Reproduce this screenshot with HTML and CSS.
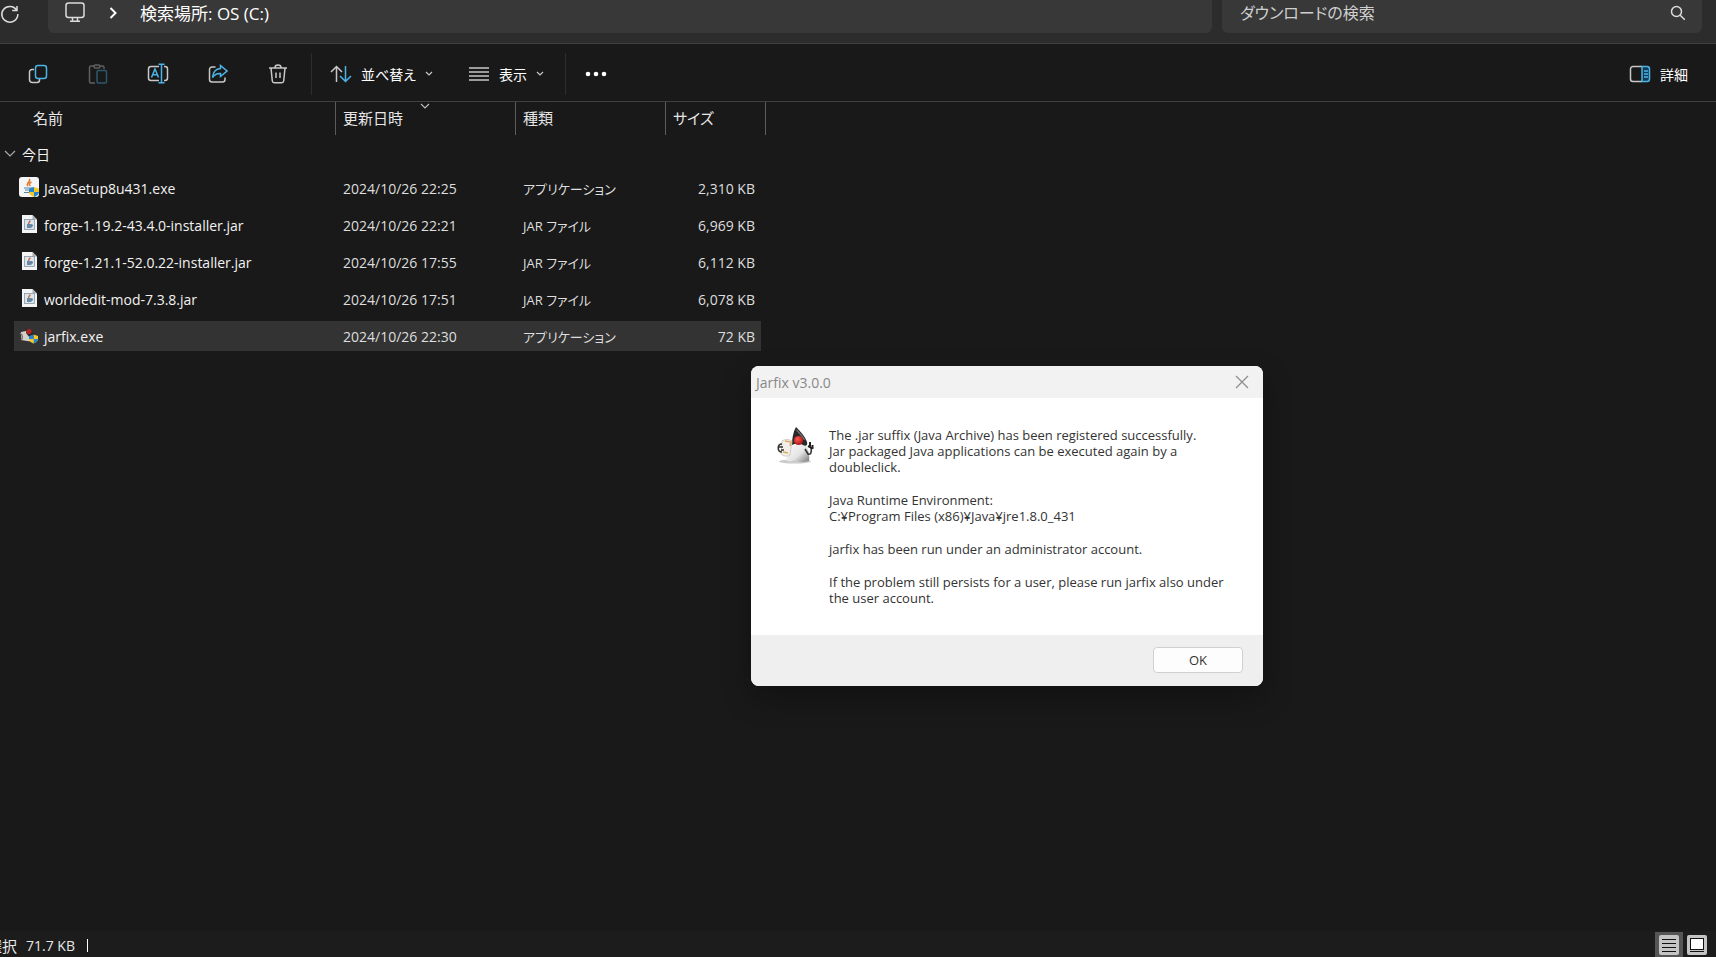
FILE: index.html
```html
<!DOCTYPE html>
<html lang="ja">
<head>
    <meta charset="UTF-8">
    <meta name="viewport" content="width=device-width, initial-scale=1.0">
    <title>ダウンロード</title>
    <link rel="stylesheet" href="styles.css">
</head>
<body>
    <div class="explorer">
        <header class="navbar">
            <button class="refresh" aria-label="最新の情報に更新">
                <svg width="20" height="20" viewBox="0 0 20 20"><path d="M16.6 6.2A8 7.8 0 1 0 17.8 10M17 2v4.6h-4.8"/></svg>
            </button>
            <nav class="address">
                <svg class="monitor" width="22" height="22" viewBox="0 0 22 22"><rect x="2" y="1" width="18" height="14.5" rx="2.5"/><path d="M8.5 16v3M13.500 16v3M6 19.300h10"/></svg>
                <svg class="crumb-arrow" width="8" height="12" viewBox="0 0 8 12"><path d="M1.500 1l5 5-5 5"/></svg>
                <a href="#">検索場所: OS (C:)</a>
            </nav>
            <form class="search">
                <input type="text" placeholder="ダウンロードの検索" aria-label="ダウンロードの検索">
                <svg width="16" height="16" viewBox="0 0 16 16"><circle cx="6.500" cy="6.500" r="5"/><path d="M10.200 10.200l4.600 4.600"/></svg>
            </form>
        </header>

        <div class="toolbar">
            <button class="tool" aria-label="コピー">
                <svg width="20" height="20" viewBox="0 0 20 20"><path class="gray" d="M6 5.500H4A2.500 2.500 0 0 0 1.500 8v7.500A3 3 0 0 0 4.500 18.500H9a2.500 2.500 0 0 0 2.500-2.500v-1"/><rect class="blue" x="7.500" y="1.500" width="11" height="13" rx="2.500"/></svg>
            </button>
            <button class="tool" aria-label="貼り付け" disabled>
                <svg width="20" height="20" viewBox="0 0 20 20"><path class="gray" d="M7 19H3a1.500 1.500 0 0 1-1.500-1.500v-14A1.500 1.500 0 0 1 3 2h3M12 2h2.500A1.500 1.500 0 0 1 16 3.500V5"/><rect class="gray" x="6" y="1" width="6" height="3" rx="1.500"/><rect class="blue" x="9" y="6.500" width="9.500" height="12.500" rx="1.500"/></svg>
            </button>
            <button class="tool" aria-label="名前の変更">
                <svg width="22" height="22" viewBox="0 0 22 22"><path class="gray" d="M12 3.500H4A2.500 2.500 0 0 0 1.500 6v9A2.500 2.500 0 0 0 4 17.500h8M17 3.500h1A2.500 2.500 0 0 1 20.500 6v9a2.500 2.500 0 0 1-2.500 2.500h-1"/><path class="blue" d="M4.500 14.500l3.500-8.500 3.500 8.500M5.800 11.800h4.600M14.500 1.500v18M11.500 1.200h6M11.500 19.800h6"/></svg>
            </button>
            <button class="tool" aria-label="共有">
                <svg width="20" height="20" viewBox="0 0 20 20"><path class="gray" d="M7.500 3H4A2.500 2.500 0 0 0 1.500 5.500v10A2.500 2.500 0 0 0 4 18h10.500a2.500 2.500 0 0 0 2.500-2.500v-2"/><path class="blue" d="M12.500 1.500l6.500 5.500-6.500 5.500V9.500C8.500 9.300 6.500 10.500 4.500 13.500 5 8.500 7.500 5 12.500 4.600z"/></svg>
            </button>
            <button class="tool" aria-label="削除">
                <svg width="20" height="20" viewBox="0 0 20 20"><path class="gray" d="M1 4h18M7 3.500a3 2.500 0 0 1 6 0M3 4l1.300 13a2 2 0 0 0 2 1.800h7.400a2 2 0 0 0 2-1.800L17 4M8 8.500v5.500M12 8.500v5.500"/></svg>
            </button>
            <div class="divider"></div>
            <button class="menu">
                <svg width="22" height="20" viewBox="0 0 22 20"><path class="gray" d="M6.500 18V2.500M1 8l5.500-5.500L12 8"/><path class="blue" d="M15.500 2v15.500M10 12l5.500 5.500L21 12"/></svg>
                <span>並べ替え</span>
                <svg class="caret" width="8" height="6" viewBox="0 0 8 6"><path d="M1 1l3 3 3-3"/></svg>
            </button>
            <button class="menu">
                <svg width="22" height="20" viewBox="0 0 22 20"><path class="gray" d="M1 4h20M1 8h20M1 12h20M1 16h20"/></svg>
                <span>表示</span>
                <svg class="caret" width="8" height="6" viewBox="0 0 8 6"><path d="M1 1l3 3 3-3"/></svg>
            </button>
            <div class="divider"></div>
            <button class="tool more" aria-label="もっと見る">
                <svg width="22" height="6" viewBox="0 0 22 6"><circle cx="3" cy="3" r="2.300"/><circle cx="11" cy="3" r="2.300"/><circle cx="19" cy="3" r="2.300"/></svg>
            </button>
            <button class="menu details">
                <svg width="22" height="18" viewBox="0 0 22 18"><path class="gray" d="M13 1.500H4A2.500 2.500 0 0 0 1.500 4v10A2.500 2.500 0 0 0 4 16.500h9"/><path class="blue fill" d="M13 1.500h5A2.500 2.500 0 0 1 20.500 4v10a2.500 2.500 0 0 1-2.500 2.500h-5z"/><path class="blue" d="M15 6h4M15 9h4M15 12h4"/></svg>
                <span>詳細</span>
            </button>
        </div>

        <main class="content">
            <table class="files">
                <thead>
                    <tr>
                        <th>名前</th>
                        <th>更新日時<svg class="sort" width="10" height="6" viewBox="0 0 10 6"><path d="M1 1l4 4 4-4"/></svg></th>
                        <th>種類</th>
                        <th>サイズ</th>
                    </tr>
                </thead>
                <tbody>
                    <tr class="group">
                        <th colspan="4"><svg width="12" height="8" viewBox="0 0 12 8"><path d="M1 1l5 5 5-5"/></svg>今日</th>
                    </tr>
                    <tr>
                        <td class="name"><svg width="22" height="22"><use href="#icon-java"/></svg>JavaSetup8u431.exe</td>
                        <td>2024/10/26 22:25</td>
                        <td class="type">アプリケーション</td>
                        <td class="size">2,310 KB</td>
                    </tr>
                    <tr>
                        <td class="name"><svg width="22" height="22"><use href="#icon-jar"/></svg>forge-1.19.2-43.4.0-installer.jar</td>
                        <td>2024/10/26 22:21</td>
                        <td class="type">JAR ファイル</td>
                        <td class="size">6,969 KB</td>
                    </tr>
                    <tr>
                        <td class="name"><svg width="22" height="22"><use href="#icon-jar"/></svg>forge-1.21.1-52.0.22-installer.jar</td>
                        <td>2024/10/26 17:55</td>
                        <td class="type">JAR ファイル</td>
                        <td class="size">6,112 KB</td>
                    </tr>
                    <tr>
                        <td class="name"><svg width="22" height="22"><use href="#icon-jar"/></svg>worldedit-mod-7.3.8.jar</td>
                        <td>2024/10/26 17:51</td>
                        <td class="type">JAR ファイル</td>
                        <td class="size">6,078 KB</td>
                    </tr>
                    <tr class="selected">
                        <td class="name"><svg width="22" height="22"><use href="#icon-jarfix"/></svg>jarfix.exe</td>
                        <td>2024/10/26 22:30</td>
                        <td class="type">アプリケーション</td>
                        <td class="size">72 KB</td>
                    </tr>
                </tbody>
            </table>
        </main>

        <footer class="statusbar">
            <span class="count">選択</span>
            <span>71.7 KB</span>
            <span class="bar"></span>
            <div class="views">
                <button class="active" aria-label="詳細表示">
                    <svg width="20" height="20" viewBox="0 0 20 20"><rect width="20" height="20" rx="2" fill="#c4c4c4"/><path d="M3 4.500h14M3 8.500h14M3 12.500h14M3 16.500h14" stroke="#111"/></svg>
                </button>
                <button aria-label="大アイコン">
                    <svg width="20" height="20" viewBox="0 0 20 20"><rect width="20" height="20" rx="2" fill="#c4c4c4"/><rect x="3.500" y="3.500" width="13" height="11" fill="#fff" stroke="#111"/><path d="M3 16.500h14" stroke="#111"/></svg>
                </button>
            </div>
        </footer>
    </div>

    <div class="dialog" role="dialog" aria-labelledby="dialog-title">
        <div class="dialog-title">
            <span id="dialog-title">Jarfix v3.0.0</span>
            <button aria-label="閉じる">
                <svg width="14" height="14" viewBox="0 0 14 14"><path d="M1 1l12 12M13 1L1 13"/></svg>
            </button>
        </div>
        <div class="dialog-body">
            <svg width="38" height="38" viewBox="0 0 38 38"><use href="#icon-duke"/></svg>
            <div class="message">
                <p>The .jar suffix (Java Archive) has been registered successfully.<br>Jar packaged Java applications can be executed again by a<br>doubleclick.</p>
                <p>Java Runtime Environment:<br>C:¥Program Files (x86)¥Java¥jre1.8.0_431</p>
                <p>jarfix has been run under an administrator account.</p>
                <p>If the problem still persists for a user, please run jarfix also under<br>the user account.</p>
            </div>
        </div>
        <div class="dialog-footer">
            <button>OK</button>
        </div>
    </div>

    <svg class="sprite" aria-hidden="true">
        <defs>
            <linearGradient id="body" x1="0" y1="0" x2="1" y2="1">
                <stop offset="0" stop-color="#fff"/>
                <stop offset=".6" stop-color="#e4e4e4"/>
                <stop offset="1" stop-color="#777"/>
            </linearGradient>
            <radialGradient id="nose" cx=".4" cy=".35" r=".7">
                <stop offset="0" stop-color="#ff5a50"/>
                <stop offset="1" stop-color="#a80d12"/>
            </radialGradient>
        </defs>
        <symbol id="shield" viewBox="0 0 12 12">
            <path d="M6 0l6 2v4c0 3-3 5-6 6z" fill="#f6c927"/>
            <path d="M6 0L0 2v4h6zM6 6h6c0 3-3 5-6 6z" fill="#2585cf"/>
            <path d="M0 6h6v6C3 11 0 9 0 6z" fill="#f6c927"/>
        </symbol>
        <symbol id="icon-java" viewBox="0 0 22 22">
            <rect x="1" y="0" width="20" height="20" rx="3" fill="#f3f5f7"/>
            <path d="M11 2c3 2-4 4-1 7M13.500 5c-3 1.500-2.500 3-1 4" fill="none" stroke="#e4792b" stroke-width="1.500"/>
            <path d="M6 11h8M7 13h6M6 15.500h8M14 11c3 0 2 2.500-.5 3" fill="none" stroke="#5486ab" stroke-width="1.200"/>
            <use href="#shield" x="11" y="10" width="10" height="10"/>
        </symbol>
        <symbol id="icon-jar" viewBox="0 0 22 22">
            <path d="M4 1h10.500L19 5.500V19H4z" fill="#f2f4f5"/>
            <path d="M14.500 1v4.500H19z" fill="#a8adb2"/>
            <rect x="6.500" y="5.500" width="10" height="10" fill="#dce5ec" stroke="#8796a3" stroke-width=".8"/>
            <path d="M11.500 6.500c1.500 1-2 2-.5 3.500" fill="none" stroke="#c56b42"/>
            <path d="M9 11h4.500M9 13h4.500M14 10.500v2" fill="none" stroke="#456b8c"/>
        </symbol>
        <symbol id="icon-jarfix" viewBox="0 0 22 22">
            <path d="M3 7l5-1 5 3 4 8-8-1-6-1z" fill="#d5d0ca"/>
            <path d="M2 8c3 2 3 5 1 7" fill="none" stroke="#777" stroke-width="1.500"/>
            <path d="M9 4l4 2 5 5-6 2-4-5z" fill="#2a2424"/>
            <circle cx="11" cy="6.500" r="2.600" fill="#bb2022"/>
            <use href="#shield" x="11" y="9" width="9" height="10"/>
        </symbol>
        <symbol id="icon-duke" viewBox="0 0 38 38">
            <ellipse cx="19" cy="34.500" rx="16" ry="2" fill="#999" opacity=".5"/>
            <path d="M17 14c-3 3-4 12-7 19 4 3 7-1 11 1 4 2 8 1 12 0 1-7-1-14-6-20z" fill="url(#body)"/>
            <path d="M29 22l3 5c3 1 4-2 3-7" fill="none" stroke="#333" stroke-width="1.600"/>
            <path d="M34 15v6M32 19l4 2M36.500 18v4" stroke="#222" stroke-width="2"/>
            <path d="M20 0c4 4 9 9 11 15 1 3-1 5-4 3-5-2-9-1-11 0 0-6 1-13 4-18z" fill="#292929"/>
            <path d="M20.500 3c3 3 6 6 8 10" fill="none" stroke="#777" stroke-width="1.200"/>
            <circle cx="22.500" cy="13.500" r="4.600" fill="url(#nose)"/>
            <path d="M6 14c3-2 7-2 10 0l-2 14c-3 2-7 1-9-1z" fill="#f3efe8" stroke="#c6c2bb" stroke-width=".8"/>
            <path d="M9 14l6 1-1 4M7 25l5 1" fill="none" stroke="#d9ab65" stroke-width="1.400"/>
            <path d="M6 17c-5 0-5 8 0 8M3 20h4M5 23h3" fill="none" stroke="#333" stroke-width="1.600"/>
        </symbol>
    </svg>
</body>
</html>
```
FILE: styles.css
```css
* {
    box-sizing: border-box;
}

body {
    margin: 0;
    font-family: 'Open Sans', 'Noto Sans CJK JP', sans-serif;
    font-size: 14px;
    font-feature-settings: 'palt';
    color: #e6e6e6;
    background: #191919;
    overflow: hidden;
}

button,
input {
    font: inherit;
    font-feature-settings: inherit;
    color: inherit;
    background: none;
    border: 0;
    padding: 0;
}

svg {
    flex: none;
    fill: none;
    stroke: #dcdcdc;
    stroke-width: 1.5;
}

.explorer {
    display: flex;
    flex-direction: column;
    height: 100vh;
}

/* address bar */
.navbar {
    display: flex;
    gap: 10px;
    height: 44px;
    padding-right: 14px;
    padding-bottom: 10px;
    background: #2c2c2c;
    border-bottom: 1px solid #404040;
}

.refresh {
    display: flex;
    align-items: center;
    width: 38px;
    padding-bottom: 6px;
}

.address,
.search {
    display: flex;
    align-items: center;
    padding-bottom: 8px;
    background: #383838;
    border-radius: 0 0 6px 6px;
}

.address {
    flex: 1;
    padding-left: 16px;
    font-size: 17px;
}

.address a {
    color: #fff;
    text-decoration: none;
}

.monitor {
    margin-right: 23px;
}

.crumb-arrow {
    margin-right: 23px;
    stroke: #fff;
    stroke-width: 2;
}

.search {
    flex: 0 0 480px;
    padding-left: 18px;
    padding-right: 16px;
    font-size: 16px;
}

.search input {
    flex: 1;
    outline: 0;
}

.search input::placeholder {
    color: #cfcfcf;
}

/* command bar */
.toolbar {
    display: flex;
    align-items: center;
    height: 58px;
    padding: 2px 28px 0 8px;
    border-bottom: 1px solid #404040;
    color: #fff;
}

.tool {
    display: flex;
    justify-content: center;
    align-items: center;
    width: 60px;
    height: 40px;
}

.tool:disabled {
    opacity: 0.4;
}

.gray {
    stroke: #c8c8c8;
}

.blue {
    stroke: #4cb4e7;
}

.fill {
    fill: #123c55;
}

.divider {
    width: 1px;
    height: 42px;
    margin: 0 18px 0 3px;
    background: #2d2d2d;
}

.menu {
    display: flex;
    align-items: center;
    gap: 9px;
    margin-right: 35px;
    height: 40px;
}

.menu + .divider {
    margin: 0 0 0 -14px;
}

.caret {
    stroke: #c8c8c8;
    stroke-width: 1.2;
}

.more svg {
    fill: #fff;
    stroke: none;
}

.details {
    margin-left: auto;
    margin-right: 0;
}

/* file list */
.content {
    flex: 1;
}

.files,
.files thead,
.files tbody {
    display: block;
}

.files tr {
    display: grid;
    grid-template-columns: 321px 180px 150px 96px;
    align-items: center;
    width: 747px;
    height: 30px;
    margin-left: 14px;
    margin-bottom: 7px;
}

.files td {
    padding: 0 6px 0 8px;
    color: #dedede;
    white-space: nowrap;
}

.files th {
    font-weight: normal;
    text-align: left;
    font-size: 15px;
}

.files thead tr {
    grid-template-columns: 336px 180px 150px 100px;
    width: 766px;
    height: 33px;
    margin: 0;
}

.files thead th {
    position: relative;
    height: 33px;
    padding-left: 7px;
    line-height: 31px;
    border-right: 1px solid #5c5c5c;
}

.files thead th:first-child {
    padding-left: 33px;
}

.sort {
    position: absolute;
    top: 1px;
    left: 84px;
    stroke: #bbb;
    stroke-width: 1.2;
}

.files .group {
    margin: 4px 0 4px 3px;
}

.files .group th {
    display: flex;
    align-items: center;
    gap: 6px;
    font-size: 14px;
    color: #f2f2f2;
}

.group svg {
    stroke: #aaa;
    stroke-width: 1.2;
}

.files .name {
    display: flex;
    align-items: center;
    gap: 4px;
    padding-left: 4px;
    color: #f2f2f2;
}

.name svg {
    stroke: none;
}

.files .type {
    font-size: 13px;
}

.files .size {
    text-align: right;
}

.selected {
    background: #333;
}

/* status bar */
.statusbar {
    display: flex;
    align-items: center;
    gap: 9px;
    height: 26px;
    padding-top: 3px;
    background: #1c1c1c;
}

.count {
    margin-left: -13px;
    font-size: 15px;
}

.bar {
    width: 1px;
    height: 13px;
    margin-left: 3px;
    background: #fff;
}

.views {
    display: flex;
    align-self: flex-end;
    margin-left: auto;
    padding-right: 5px;
}

.views button {
    display: flex;
    justify-content: center;
    align-items: center;
    width: 28px;
    height: 25px;
}

.views svg {
    stroke: none;
    stroke-width: 1;
}

.views .active {
    background: #555;
}

/* message box */
.dialog {
    position: absolute;
    top: 366px;
    left: 751px;
    width: 512px;
    overflow: hidden;
    border-radius: 8px;
    background: #fff;
    color: #333;
    box-shadow: 0 12px 30px rgba(0, 0, 0, 0.3);
}

.dialog-title {
    display: flex;
    align-items: center;
    justify-content: space-between;
    height: 32px;
    padding: 0 14px 0 5px;
    background: #f2f2f2;
    color: #888;
}

.dialog-title button {
    display: flex;
}

.dialog-title svg {
    stroke: #8c8c8c;
    stroke-width: 1.2;
}

.dialog-body {
    display: flex;
    gap: 15px;
    padding: 29px 20px 29px 25px;
}

.dialog-body svg {
    stroke: none;
}

.message {
    font-size: 13px;
    line-height: 16px;
    white-space: nowrap;
}

.message p {
    margin: 0 0 17px;
}

.message p:last-child {
    margin-bottom: 0;
}

.dialog-footer {
    display: flex;
    justify-content: flex-end;
    padding: 12px 20px 13px;
    background: #efefef;
}

.dialog-footer button {
    width: 90px;
    height: 26px;
    background: #fdfdfd;
    border: 1px solid #d0d0d0;
    border-radius: 4px;
    font-size: 13px;
}

.sprite {
    position: absolute;
    width: 0;
    height: 0;
}
```
